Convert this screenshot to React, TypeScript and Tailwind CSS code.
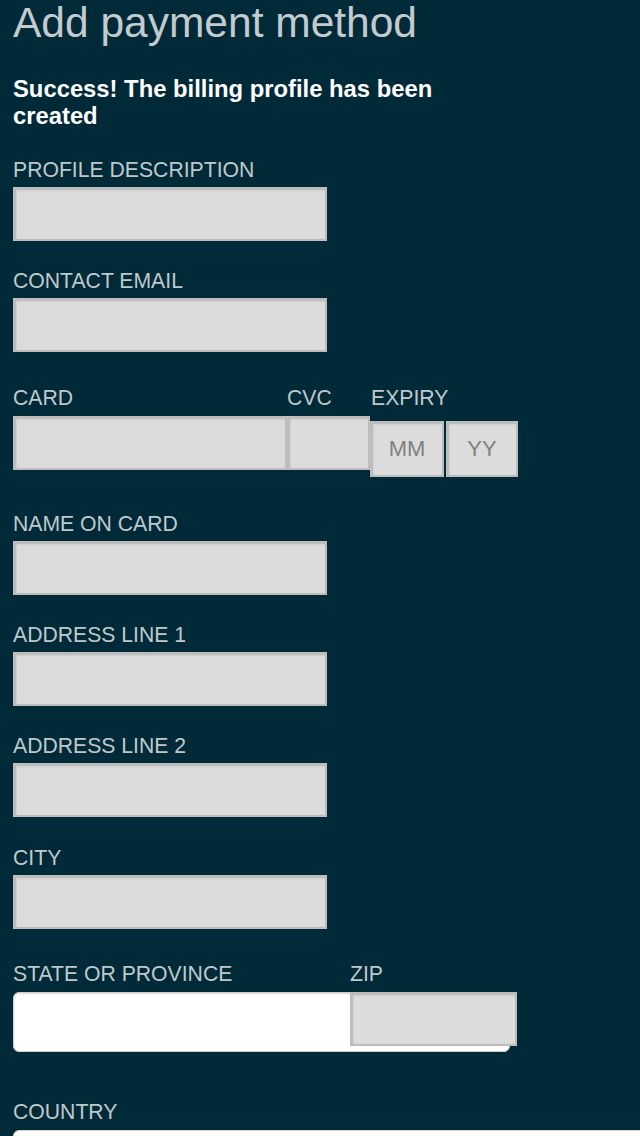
import React from 'react';

const font = { fontFamily: '"Liberation Sans", Arial, sans-serif' };

const labelCls = 'block text-[21.2px] leading-6 text-[#bfc9cc] uppercase';
const greyInput =
  'block h-[54px] bg-[#dcdcdc] border-2 border-[#bdbdbd] shadow-[inset_1px_1px_2px_rgba(0,0,0,0.18)] outline-none';

function Field({ label, className = '' }: Readonly<{ label: string; className?: string }>) {
  return (
    <div className={className}>
      <label className={labelCls}>{label}</label>
      <input readOnly className={`${greyInput} mt-[5px] w-[314px]`} />
    </div>
  );
}

export default function App() {
  return (
    <div className="min-h-[1136px] w-[640px] overflow-hidden bg-[#012a39] pl-[13px]" style={font}>
      <h1 className="text-[42.5px] leading-[46px] font-normal text-[#c3cbcf] whitespace-nowrap">
        Add payment method
      </h1>

      <p className="mt-[29px] w-[460px] text-[23.8px] leading-[27px] font-bold text-white">
        Success! The billing profile has been created
      </p>

      <Field label="Profile description" className="mt-[29px]" />
      <Field label="Contact email" className="mt-[28px]" />

      {/* card / cvc / expiry row */}
      <div className="mt-[34px] flex">
        <div className="w-[274px]">
          <label className={labelCls}>Card</label>
          <input readOnly className={`${greyInput} mt-[6px] w-[274px]`} />
        </div>
        <div className="w-[83px]">
          <label className={labelCls}>CVC</label>
          <input readOnly className={`${greyInput} mt-[6px] w-[83px]`} />
        </div>
        <div>
          <label className={`${labelCls} pl-px`}>Expiry</label>
          <div className="mt-[11px] flex gap-[2px]">
            <input
              readOnly
              placeholder="MM"
              className={`${greyInput} h-[56px] w-[74px] text-center text-[22px] placeholder:text-[#808080]`}
            />
            <input
              readOnly
              placeholder="YY"
              className={`${greyInput} h-[56px] w-[72px] text-center text-[22px] placeholder:text-[#808080]`}
            />
          </div>
        </div>
      </div>

      <Field label="Name on card" className="mt-[35px]" />
      <Field label="Address line 1" className="mt-[28px]" />
      <Field label="Address line 2" className="mt-[28px]" />
      <Field label="City" className="mt-[29px]" />

      {/* state / zip row */}
      <div className="mt-[33px] flex">
        <div className="w-[337px]">
          <label className={labelCls}>State or province</label>
          <input
            readOnly
            className="mt-[6px] block h-[60px] w-[497px] rounded-md border border-[#cfcfcf] bg-white shadow-[inset_0_1px_2px_rgba(0,0,0,0.15)] outline-none"
          />
        </div>
        <div className="relative z-10">
          <label className={labelCls}>Zip</label>
          <input readOnly className={`${greyInput} mt-[6px] h-[53px] w-[167px]`} />
        </div>
      </div>

      <div className="mt-[48px]">
        <label className={labelCls}>Country</label>
        <input
          readOnly
          className="mt-[6px] block h-[60px] w-[660px] rounded-md border border-[#cfcfcf] bg-white outline-none"
        />
      </div>
    </div>
  );
}
